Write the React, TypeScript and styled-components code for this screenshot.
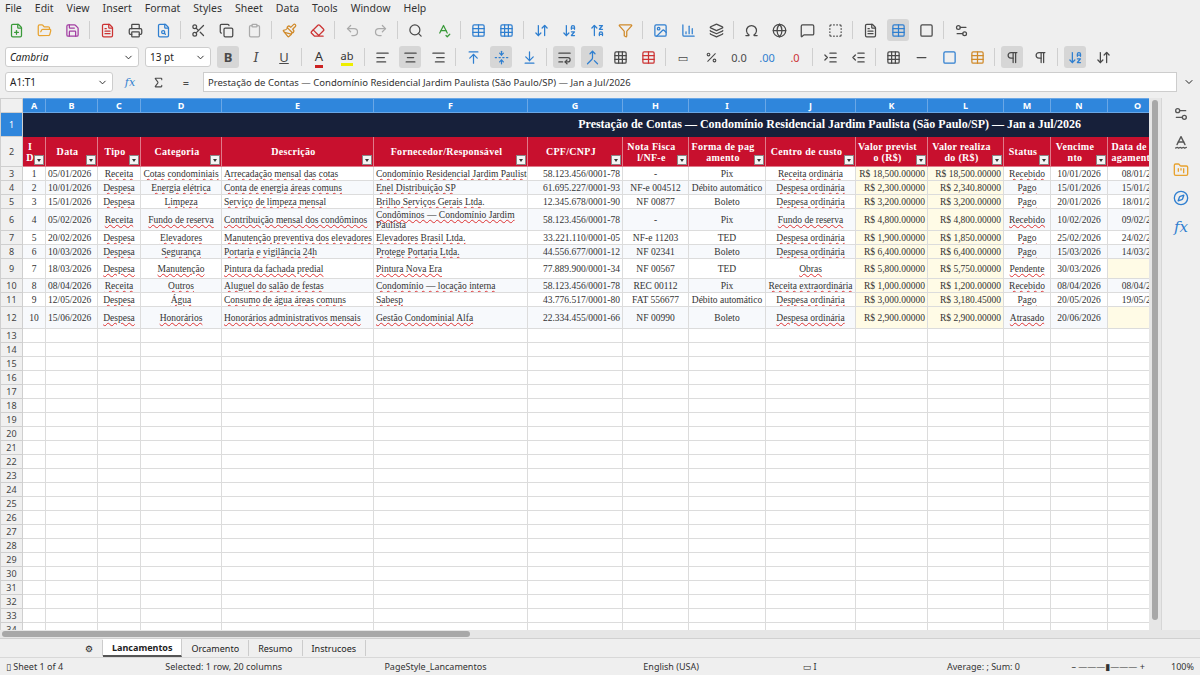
import React from "react";
import styled, { createGlobalStyle } from "styled-components";
import {
  FilePlus, FolderOpen, Save, FileText, Printer, FileSearch, Scissors, Copy, Clipboard,
  Paintbrush, Eraser, Undo2, Redo2, Search, SpellCheck, Table, Grid3x3, ArrowDownAZ,
  ArrowUpZA, Filter, Image, BarChart3, Omega, Globe, MessageSquare, SquareDashed,
  AlignLeft, AlignCenter, AlignRight, ArrowUpToLine, FoldVertical, ArrowDownToLine,
  WrapText, Percent, Square, Minus, Settings2, SpellCheck2, FolderKanban, Compass,
  ChevronDown, Sigma, Pilcrow, ArrowDownUp, Layers, IndentIncrease, IndentDecrease, Merge
} from "lucide-react";

const Global = createGlobalStyle`
  html, body { margin: 0; padding: 0; background: #efefef; }
  body { font-family: "Noto Sans", "DejaVu Sans", sans-serif; font-size: 11px; color: #222; overflow: hidden; }
`;

const Page = styled.div`
  width: 1200px; height: 675px; display: flex; flex-direction: column; background: #efefef;
`;
const MenuBar = styled.div`
  height: 16px; display: flex; gap: 13px; padding: 0 5px; align-items: center; font-size: 10.5px; color: #333;
`;
const ToolRow = styled.div<{ $h: number }>`
  height: ${(p) => p.$h}px; display: flex; align-items: center; gap: 6px; padding: 0 5px;
`;
const Tool = styled.span<{ $c?: string; $on?: boolean }>`
  display: inline-flex; align-items: center; justify-content: center; height: 22px; min-width: 18px;
  color: ${(p) => p.$c || "#4a4a4a"}; border-radius: 3px; background: ${(p) => (p.$on ? "#d6d6d6" : "transparent")};
  padding: 0 2px;
`;
const Sep = styled.span` width: 1px; height: 18px; background: #cfcfcf; `;
const Combo = styled.div<{ $w: number; $italic?: boolean }>`
  width: ${(p) => p.$w}px; height: 20px; background: #fff; border: 1px solid #cdcdcd; border-radius: 3px;
  display: flex; align-items: center; justify-content: space-between; padding: 0 4px; box-sizing: border-box;
  font-size: 10px; font-style: ${(p) => (p.$italic ? "italic" : "normal")};
`;
const FormulaInput = styled.div`
  flex: 1; height: 18px; background: #fff; border: 1px solid #cdcdcd; display: flex; align-items: center;
  padding: 0 4px; font-size: 9.5px; color: #333;
`;
const SheetArea = styled.div` display: flex; flex: 1; min-height: 0; margin-top: 4px; `;
const GridWrap = styled.div` width: 1150px; overflow: hidden; background: #fff; `;
const VScroll = styled.div`
  width: 12px; background: #e6e6e6; position: relative;
`;
const VThumb = styled.div` position: absolute; left: 3px; top: 2px; width: 6px; height: 520px; background: #a8a8a8; border-radius: 3px; `;
const Sidebar = styled.div`
  width: 38px; display: flex; flex-direction: column; align-items: center; gap: 12px; padding-top: 8px; color: #2f7fd0;
  border-left: 1px solid #d6d6d6;
`;
const Grid = styled.table`
  border-collapse: collapse; table-layout: fixed; font-family: "Liberation Serif", "DejaVu Serif", serif;
  font-size: 9.5px; color: #333;
  td { border: 1px solid #dcdcdc; padding: 0 2px; white-space: nowrap; overflow: hidden; box-sizing: border-box; }
`;
const ColHead = styled.td`
  background: #2f86dc; color: #fff; text-align: center; font-family: "Noto Sans", sans-serif; font-weight: bold;
  font-size: 9px; height: 13px; border-color: #6aa7e6 !important;
`;
const RowHead = styled.td<{ $sel?: boolean }>`
  background: ${(p) => (p.$sel ? "#2f86dc" : "#f0f0f0")}; color: ${(p) => (p.$sel ? "#fff" : "#444")};
  text-align: center; font-family: "Noto Sans", sans-serif; font-size: 9px; border-color: #cfcfcf !important;
`;
const Title = styled.td`
  background: #17203a; color: #fff; font-weight: bold; font-size: 12px; text-align: right;
  padding-right: 86px !important; border: 1px solid #17203a !important;
`;
const Head = styled.td`
  background: #c8102e; color: #fff; font-weight: bold; font-size: 10px; text-align: center; position: relative;
  white-space: normal !important; word-break: break-all; line-height: 11px; border-color: #e07a8a !important;
  padding-right: 10px !important; letter-spacing: 0.3px;
`;
const Drop = styled.span`
  position: absolute; right: 1px; bottom: 1px; width: 10px; height: 10px; background: #f4f4f4; border: 1px solid #888;
  box-sizing: border-box;
  &::after { content: ""; position: absolute; left: 2px; top: 3px; border: 2.5px solid transparent; border-top: 3px solid #333; }
`;
const Cell = styled.td<{ $al?: string; $sq?: boolean; $bg?: string; $wrap?: boolean }>`
  text-align: ${(p) => p.$al || "left"}; background: ${(p) => p.$bg || "#fff"};
  white-space: ${(p) => (p.$wrap ? "normal" : "nowrap")} !important; line-height: 10px;
  text-decoration: ${(p) => (p.$sq ? "underline wavy #d33" : "none")}; text-decoration-thickness: 1px;
`;
const Tabs = styled.div`
  height: 18px; display: flex; align-items: center; font-size: 9px; background: #efefef; border-top: 1px solid #d0d0d0;
  padding-left: 76px;
`;
const Tab = styled.span<{ $on?: boolean }>`
  padding: 0 9px; border-right: 1px solid #ccc; font-weight: ${(p) => (p.$on ? "bold" : "normal")};
  border-bottom: ${(p) => (p.$on ? "2px solid #555" : "none")}; height: 16px; display: flex; align-items: center;
  background: ${(p) => (p.$on ? "#fff" : "transparent")};
`;
const HScroll = styled.div`
  height: 8px; background: #e6e6e6; position: relative;
  &::after { content: ""; position: absolute; left: 2px; top: 1px; width: 468px; height: 6px; background: #a8a8a8; border-radius: 3px; }
`;
const Status = styled.div`
  height: 17px; display: flex; align-items: center; font-size: 9px; color: #333; padding: 0 6px; border-top: 1px solid #d8d8d8;
`;
const StatusItem = styled.span<{ $w: number }>` width: ${(p) => p.$w}px; `;

const widths = [22, 23, 52, 43, 81, 152, 154, 95, 66, 77, 90, 72, 76, 47, 57, 60];
const letters = ["", "A", "B", "C", "D", "E", "F", "G", "H", "I", "J", "K", "L", "M", "N", "O"];
const heads = ["ID", "Data", "Tipo", "Categoria", "Descrição", "Fornecedor/Responsável", "CPF/CNPJ", "Nota Fiscal/NF-e",
  "Forma de pagamento", "Centro de custo", "Valor previsto (R$)", "Valor realizado (R$)", "Status", "Vencimento", "Data de pagamento"];

type R = [string, string, string, string, string, string, string, string, string, string, string, string, string, string, string, number];
const rows: R[] = [
  ["1", "05/01/2026", "Receita", "Cotas condominiais", "Arrecadação mensal das cotas", "Condomínio Residencial Jardim Paulista", "58.123.456/0001-78", "-", "Pix", "Receita ordinária", "R$ 18,500.00000", "R$ 18,500.00000", "Recebido", "10/01/2026", "08/01/2026", 14],
  ["2", "10/01/2026", "Despesa", "Energia elétrica", "Conta de energia áreas comuns", "Enel Distribuição SP", "61.695.227/0001-93", "NF-e 004512", "Débito automático", "Despesa ordinária", "R$ 2,300.00000", "R$ 2,340.80000", "Pago", "15/01/2026", "15/01/2026", 14],
  ["3", "15/01/2026", "Despesa", "Limpeza", "Serviço de limpeza mensal", "Brilho Serviços Gerais Ltda.", "12.345.678/0001-90", "NF 00877", "Boleto", "Despesa ordinária", "R$ 3,200.00000", "R$ 3,200.00000", "Pago", "20/01/2026", "18/01/2026", 14],
  ["4", "05/02/2026", "Receita", "Fundo de reserva", "Contribuição mensal dos condôminos", "Condôminos — Condomínio Jardim Paulista", "58.123.456/0001-78", "-", "Pix", "Fundo de reserva", "R$ 4,800.00000", "R$ 4,800.00000", "Recebido", "10/02/2026", "09/02/2026", 22],
  ["5", "20/02/2026", "Despesa", "Elevadores", "Manutenção preventiva dos elevadores", "Elevadores Brasil Ltda.", "33.221.110/0001-05", "NF-e 11203", "TED", "Despesa ordinária", "R$ 1,900.00000", "R$ 1,850.00000", "Pago", "25/02/2026", "24/02/2026", 14],
  ["6", "10/03/2026", "Despesa", "Segurança", "Portaria e vigilância 24h", "Protege Portaria Ltda.", "44.556.677/0001-12", "NF 02341", "Boleto", "Despesa ordinária", "R$ 6,400.00000", "R$ 6,400.00000", "Pago", "15/03/2026", "14/03/2026", 14],
  ["7", "18/03/2026", "Despesa", "Manutenção", "Pintura da fachada predial", "Pintura Nova Era", "77.889.900/0001-34", "NF 00567", "TED", "Obras", "R$ 5,800.00000", "R$ 5,750.00000", "Pendente", "30/03/2026", "", 20],
  ["8", "08/04/2026", "Receita", "Outros", "Aluguel do salão de festas", "Condomínio — locação interna", "58.123.456/0001-78", "REC 00112", "Pix", "Receita extraordinária", "R$ 1,000.00000", "R$ 1,200.00000", "Recebido", "08/04/2026", "08/04/2026", 14],
  ["9", "12/05/2026", "Despesa", "Água", "Consumo de água áreas comuns", "Sabesp", "43.776.517/0001-80", "FAT 556677", "Débito automático", "Despesa ordinária", "R$ 3,000.00000", "R$ 3,180.45000", "Pago", "20/05/2026", "19/05/2026", 14],
  ["10", "15/06/2026", "Despesa", "Honorários", "Honorários administrativos mensais", "Gestão Condominial Alfa", "22.334.455/0001-66", "NF 00990", "Boleto", "Despesa ordinária", "R$ 2,900.00000", "R$ 2,900.00000", "Atrasado", "20/06/2026", "", 22],
];
const align = ["center", "left", "center", "center", "left", "left", "right", "center", "center", "center", "right", "right", "center", "center", "right"];
const squig = [false, false, true, true, true, true, false, false, false, true, false, false, true, false, false];

export default function App() {
  const I = 15;
  return (
    <Page>
      <Global />
      <MenuBar>
        {["File", "Edit", "View", "Insert", "Format", "Styles", "Sheet", "Data", "Tools", "Window", "Help"].map((m) => <span key={m}>{m}</span>)}
      </MenuBar>
      <ToolRow $h={28}>
        <Tool $c="#3a9a3a"><FilePlus size={I} /></Tool><Tool $c="#e8a330"><FolderOpen size={I} /></Tool><Tool $c="#a33fa3"><Save size={I} /></Tool>
        <Sep /><Tool $c="#c33"><FileText size={I} /></Tool><Tool><Printer size={I} /></Tool><Tool $c="#2f7fd0"><FileSearch size={I} /></Tool><Sep />
        <Tool><Scissors size={I} /></Tool><Tool><Copy size={I} /></Tool><Tool $c="#aaa"><Clipboard size={I} /></Tool><Sep />
        <Tool $c="#d08a2a"><Paintbrush size={I} /></Tool><Tool $c="#c33"><Eraser size={I} /></Tool><Sep />
        <Tool $c="#aaa"><Undo2 size={I} /></Tool><Tool $c="#aaa"><Redo2 size={I} /></Tool><Sep />
        <Tool><Search size={I} /></Tool><Tool $c="#3a9a3a"><SpellCheck size={I} /></Tool><Sep />
        <Tool $c="#2f7fd0"><Table size={I} /></Tool><Tool $c="#2f7fd0"><Grid3x3 size={I} /></Tool><Sep />
        <Tool $c="#2f7fd0"><ArrowDownUp size={I} /></Tool><Tool $c="#2f7fd0"><ArrowDownAZ size={I} /></Tool><Tool $c="#2f7fd0"><ArrowUpZA size={I} /></Tool><Tool $c="#d08a2a"><Filter size={I} /></Tool><Sep />
        <Tool $c="#2f7fd0"><Image size={I} /></Tool><Tool $c="#2f7fd0"><BarChart3 size={I} /></Tool><Tool><Layers size={I} /></Tool><Sep />
        <Tool><Omega size={I} /></Tool><Tool><Globe size={I} /></Tool><Tool><MessageSquare size={I} /></Tool><Tool><SquareDashed size={I} /></Tool><Sep />
        <Tool><FileText size={I} /></Tool><Tool $on $c="#2f7fd0"><Table size={I} /></Tool><Tool><Square size={I} /></Tool><Sep /><Tool><Settings2 size={I} /></Tool>
      </ToolRow>
      <ToolRow $h={26}>
        <Combo $w={134} $italic>Cambria<ChevronDown size={11} /></Combo>
        <Combo $w={66}>13 pt<ChevronDown size={11} /></Combo>
        <Tool $on><b style={{ fontSize: 13 }}>B</b></Tool><Tool><i style={{ fontSize: 13, fontFamily: "DejaVu Serif" }}>I</i></Tool><Tool><u style={{ fontSize: 13 }}>U</u></Tool><Sep />
        <Tool $c="#c22"><span style={{ fontSize: 13, borderBottom: "3px solid #c22", color: "#333" }}>A</span></Tool><Tool $c="#333"><span style={{ borderBottom: "3px solid #ee0", fontSize: 11 }}>ab</span></Tool><Sep />
        <Tool><AlignLeft size={I} /></Tool><Tool $on><AlignCenter size={I} /></Tool><Tool><AlignRight size={I} /></Tool><Sep />
        <Tool $c="#2f7fd0"><ArrowUpToLine size={I} /></Tool><Tool $on $c="#2f7fd0"><FoldVertical size={I} /></Tool><Tool $c="#2f7fd0"><ArrowDownToLine size={I} /></Tool><Sep />
        <Tool $on><WrapText size={I} /></Tool><Tool $on $c="#2f7fd0"><Merge size={I} /></Tool><Tool><Grid3x3 size={I} /></Tool><Tool $c="#c33"><Table size={I} /></Tool><Sep />
        <Tool>▭</Tool><Tool><Percent size={13} /></Tool><Tool>0.0</Tool><Tool $c="#2f7fd0">.00</Tool><Tool $c="#c33">.0</Tool><Sep />
        <Tool><IndentIncrease size={I} /></Tool><Tool><IndentDecrease size={I} /></Tool><Sep />
        <Tool><Grid3x3 size={I} /></Tool><Tool><Minus size={I} /></Tool><Tool $c="#2f7fd0"><Square size={I} /></Tool><Tool $c="#d08a2a"><Table size={I} /></Tool><Sep />
        <Tool $on><Pilcrow size={I} /></Tool><Tool><Pilcrow size={I} /></Tool><Sep /><Tool $on $c="#2f7fd0"><ArrowDownAZ size={I} /></Tool><Tool><ArrowDownUp size={I} /></Tool>
      </ToolRow>
      <ToolRow $h={24}>
        <Combo $w={108}>A1:T1<ChevronDown size={11} /></Combo>
        <Tool $c="#2f7fd0"><i style={{ fontFamily: "DejaVu Serif" }}>fx</i></Tool><Tool><Sigma size={13} /></Tool><Tool>=</Tool>
        <FormulaInput>Prestação de Contas — Condomínio Residencial Jardim Paulista (São Paulo/SP) — Jan a Jul/2026</FormulaInput>
        <ChevronDown size={12} />
      </ToolRow>
      <SheetArea>
        <GridWrap>
          <Grid style={{ width: widths.reduce((a, b) => a + b, 0) }}>
            <colgroup>{widths.map((w, i) => <col key={i} style={{ width: w }} />)}</colgroup>
            <tbody>
              <tr>{letters.map((l, i) => i === 0 ? <RowHead key={i} style={{ height: 13 }} /> : <ColHead key={i}>{l}</ColHead>)}</tr>
              <tr style={{ height: 24 }}><RowHead $sel>1</RowHead>
                <Title colSpan={15}>Prestação de Contas — Condomínio Residencial Jardim Paulista (São Paulo/SP) — Jan a Jul/2026</Title></tr>
              <tr style={{ height: 30 }}><RowHead>2</RowHead>
                {heads.map((h, i) => <Head key={i}>{h}<Drop /></Head>)}</tr>
              {rows.map((r, ri) => (
                <tr key={ri} style={{ height: r[15] }}>
                  <RowHead>{ri + 3}</RowHead>
                  {r.slice(0, 15).map((v, ci) => (
                    <Cell key={ci} $al={align[ci]} $sq={squig[ci] && v !== ""} $wrap={ci === 5 && ri === 3}
                      $bg={ci === 10 || ci === 11 || (ci === 14 && v === "") ? "#fffbe6" : ri % 2 ? "#f7f9fc" : "#fff"}>{v}</Cell>
                  ))}
                </tr>
              ))}
              {Array.from({ length: 22 }, (_, k) => (
                <tr key={k} style={{ height: 13.4 }}><RowHead>{k + 13}</RowHead>{letters.slice(1).map((_, c) => <Cell key={c} />)}</tr>
              ))}
            </tbody>
          </Grid>
        </GridWrap>
        <VScroll><VThumb /></VScroll>
        <Sidebar>
          <Settings2 size={16} color="#555" /><SpellCheck2 size={16} color="#555" /><FolderKanban size={16} color="#e8a330" /><Compass size={16} /><i style={{ fontFamily: "DejaVu Serif", fontSize: 15 }}>fx</i>
        </Sidebar>
      </SheetArea>
      <HScroll />
      <Tabs>
        <Tab>⚙</Tab><Tab $on>Lancamentos</Tab><Tab>Orcamento</Tab><Tab>Resumo</Tab><Tab>Instrucoes</Tab>
      </Tabs>
      <Status>
        <StatusItem $w={160}>▯ Sheet 1 of 4</StatusItem>
        <StatusItem $w={220}>Selected: 1 row, 20 columns</StatusItem>
        <StatusItem $w={260}>PageStyle_Lancamentos</StatusItem>
        <StatusItem $w={160}>English (USA)</StatusItem>
        <StatusItem $w={145}>▭ I</StatusItem>
        <StatusItem $w={125}>Average: ; Sum: 0</StatusItem>
        <StatusItem $w={100}>–  ———▮———  +</StatusItem>
        <span>100%</span>
      </Status>
    </Page>
  );
}
